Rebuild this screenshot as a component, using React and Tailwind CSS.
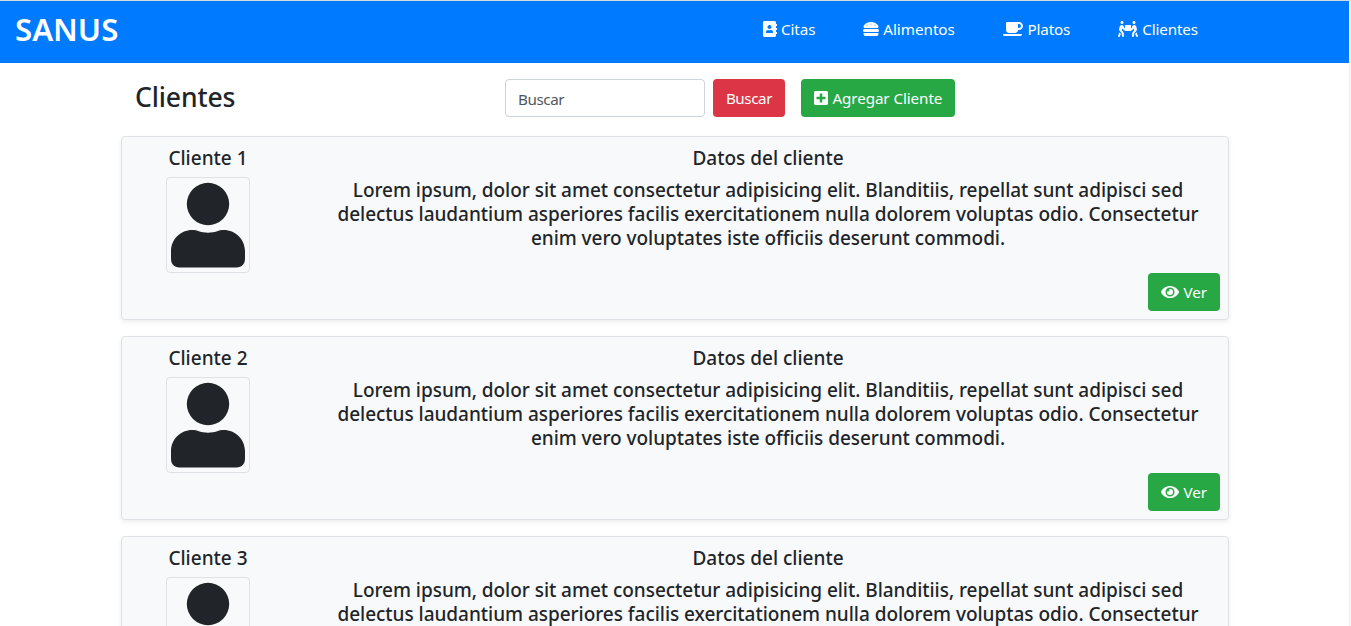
import {
  FaAddressBook,
  FaCoffee,
  FaEye,
  FaHamburger,
  FaPeopleCarry,
  FaPlusSquare,
} from "react-icons/fa";

const links = [
  { label: "Citas", Icon: FaAddressBook, width: "w-[52.3px]", icon: "w-3.5", text: "tracking-[-0.05px]" },
  { label: "Alimentos", Icon: FaHamburger, width: "w-[92.3px]", icon: "w-4", text: "" },
  { label: "Platos", Icon: FaCoffee, width: "w-[66.7px]", icon: "w-5", text: "tracking-[-0.15px]" },
  { label: "Clientes", Icon: FaPeopleCarry, width: "w-[81px]", icon: "w-5", text: "tracking-[-0.12px]" },
];

const clients = ["Cliente 1", "Cliente 2", "Cliente 3"];

function Header() {
  return (
    <header className="flex h-[62px] items-start bg-[#007bff] pl-[15px] text-white">
      <h1 className="w-[747.5px] pt-[9px] text-[31.2px] font-semibold leading-[38px]">SANUS</h1>
      <nav className="flex gap-12 pt-4">
        {links.map(({ label, Icon, width, icon, text }) => (
          <a key={label} href="#" className={`flex h-6 items-center gap-[4.4px] whitespace-nowrap ${width}`}>
            <Icon className={`h-4 shrink-0 ${icon}`} />
            <span className={text}>{label}</span>
          </a>
        ))}
      </nav>
    </header>
  );
}

function Toolbar() {
  return (
    <div className="flex h-[38px]">
      <h2 className="w-[384px] pl-[14px] pt-px text-[26.5px] font-medium leading-[34px] tracking-[-0.1px]">Clientes</h2>
      <input
        type="text"
        placeholder="Buscar"
        className="h-[38px] w-[200px] rounded border border-[#ced4da] bg-white px-3 pt-0.5 tracking-[-0.4px] placeholder:text-[#50575e]"
      />
      <button className="ml-2 h-[38px] w-[72px] rounded bg-[#dc3545] tracking-[-0.4px] text-white">
        Buscar
      </button>
      <button className="ml-4 flex h-[38px] w-[154px] items-center gap-[4.4px] whitespace-nowrap rounded bg-[#28a745] pl-[13px] text-white">
        <FaPlusSquare className="h-4 w-3.5 shrink-0" />
        <span className="tracking-[-0.08px]">Agregar Cliente</span>
      </button>
    </div>
  );
}

function Avatar() {
  return (
    <div className="h-24 w-[84px] rounded border border-[#dee2e6]">
      <svg viewBox="0 0 82 94" className="block h-[94px] w-[82px]" fill="#212529">
        <circle cx="41" cy="26" r="21.2" />
        <path d="M4 73C4 61 14 52 25 52C28.500 52 29.500 52.200 31 53C37.500 55.300 44.500 55.300 51 53C52.500 52.200 53.500 52 57 52C68 52 78 61 78 73V80.500C78 86 75 89.400 69.500 89.400H12.500C7 89.400 4 86 4 80.500Z" />
      </svg>
    </div>
  );
}

function ClientCard({ name }) {
  return (
    <article className="flex h-[184px] rounded border border-[#dee2e6] bg-[#f8f9fa] text-[19px] font-medium leading-6 shadow-[0_2px_4px_rgba(0,0,0,0.075)]">
      <div className="flex w-[172px] flex-col items-center pt-[9px]">
        <h3 className="mb-[7px] whitespace-nowrap">{name}</h3>
        <Avatar />
      </div>
      <div className="flex flex-1 flex-col items-center pl-[14px] pt-[9px]">
        <h3 className="mb-2">Datos del cliente</h3>
        <p className="whitespace-nowrap text-center tracking-[-0.035px]">
          Lorem ipsum, dolor sit amet consectetur adipisicing elit. Blanditiis, repellat sunt adipisci sed
          <br />
          delectus laudantium asperiores facilis exercitationem nulla dolorem voluptas odio. Consectetur
          <br />
          enim vero voluptates iste officiis deserunt commodi.
        </p>
        <button className="mr-2 mt-[23px] flex h-[38px] w-[72px] items-center gap-[4.4px] self-end rounded bg-[#28a745] pl-[13px] text-[15.2px] font-normal text-white">
          <FaEye className="h-4 w-[18px] shrink-0" />
          <span>Ver</span>
        </button>
      </div>
    </article>
  );
}

export default function App() {
  return (
    <div className="flex h-[626px] overflow-hidden bg-white font-['Noto_Sans',sans-serif] text-[15.2px] leading-6 text-[#212529]">
      <div className="w-[1349px] border-t border-[#d3d9df]">
        <Header />
        <main className="ml-[121px] w-[1108px] pt-4">
          <Toolbar />
          <section className="mt-[19px] flex flex-col gap-4">
            {clients.map((name) => (
              <ClientCard key={name} name={name} />
            ))}
          </section>
        </main>
      </div>
      <div className="w-0.5 border-t border-[#d3d9df] bg-[#f1f1f1]" />
    </div>
  );
}
